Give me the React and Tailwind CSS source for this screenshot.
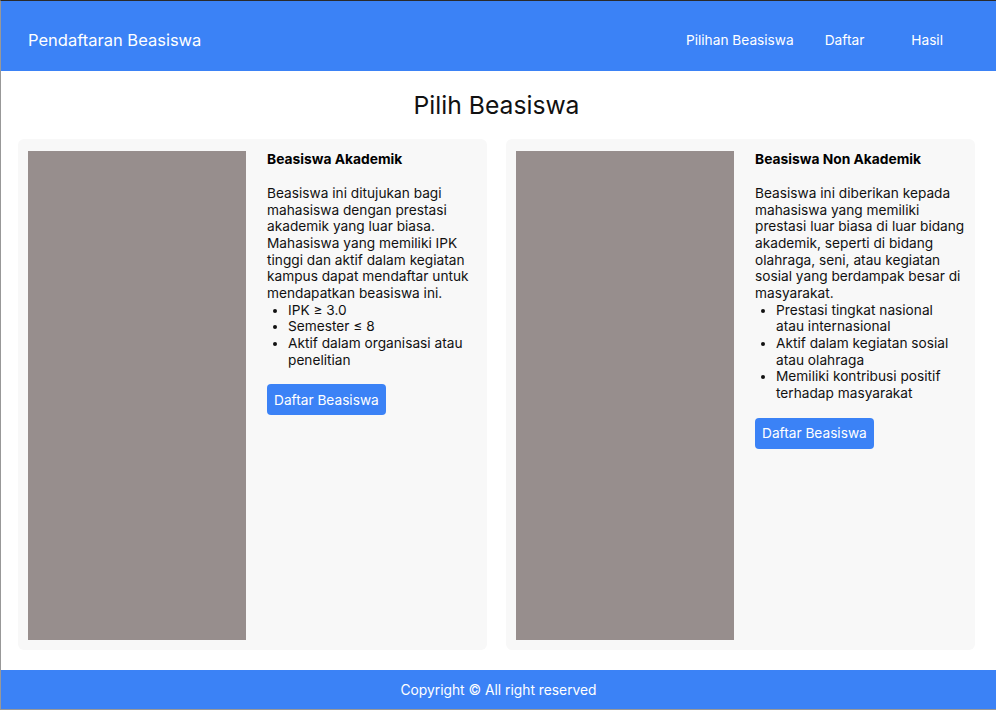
import React from 'react';

const scholarships = [
  {
    id: 'akademik',
    title: 'Beasiswa Akademik',
    description:
      'Beasiswa ini ditujukan bagi mahasiswa dengan prestasi akademik yang luar biasa. Mahasiswa yang memiliki IPK tinggi dan aktif dalam kegiatan kampus dapat mendaftar untuk mendapatkan beasiswa ini.',
    requirements: ['IPK ≥ 3.0', 'Semester ≤ 8', 'Aktif dalam organisasi atau penelitian'],
  },
  {
    id: 'non-akademik',
    title: 'Beasiswa Non Akademik',
    description:
      'Beasiswa ini diberikan kepada mahasiswa yang memiliki prestasi luar biasa di luar bidang akademik, seperti di bidang olahraga, seni, atau kegiatan sosial yang berdampak besar di masyarakat.',
    requirements: [
      'Prestasi tingkat nasional atau internasional',
      'Aktif dalam kegiatan sosial atau olahraga',
      'Memiliki kontribusi positif terhadap masyarakat',
    ],
  },
];

const ScholarshipCard = ({ item }) => (
  <div className="flex h-[511px] rounded-md bg-[#f8f8f8] pl-[10px] pr-[10px] pt-[12px] pb-[10px]">
    {/* Image placeholder */}
    <div className="w-[218px] shrink-0 bg-[#978e8d]" />
    <div className="ml-[21px] flex-1 text-[13.7px] leading-[16.67px] text-[#111]">
      <h3 className="font-bold text-black text-[13.8px] leading-[17px] mb-[17px]">{item.title}</h3>
      <p>{item.description}</p>
      <ul className="list-disc pl-[21px] pr-[4px]">
        {item.requirements.map((req) => (
          <li key={req}>{req}</li>
        ))}
      </ul>
      <button className="mt-[16px] h-[31px] rounded-[4px] bg-[#3b82f6] px-[7px] text-[13.7px] text-white">
        Daftar Beasiswa
      </button>
    </div>
  </div>
);

const App = () => {
  return (
    <div className="flex min-h-[710px] flex-col border-t border-t-[#2a2a2a] border-l border-l-black/40 border-b border-b-black/40 bg-white font-['Inter','Noto_Sans',sans-serif]">
      {/* Header */}
      <header className="flex h-[70px] items-center bg-[#3b82f6] pt-[8px] pl-[27px] pr-[53px] text-white">
        <div className="text-[16.5px]">Pendaftaran Beasiswa</div>
        <nav className="ml-auto flex items-center text-[13.7px]">
          <a href="#">Pilihan Beasiswa</a>
          <a href="#" className="ml-[31px]">Daftar</a>
          <a href="#" className="ml-[47px]">Hasil</a>
        </nav>
      </header>

      {/* Content */}
      <main className="flex-1 pl-[17px] pr-[21px] pt-[19px] pb-[19px]">
        <h1 className="mb-[18px] text-center text-[24.7px] leading-[31px] text-[#111]">Pilih Beasiswa</h1>
        <div className="grid grid-cols-2 gap-[19px]">
          {scholarships.map((item) => (
            <ScholarshipCard key={item.id} item={item} />
          ))}
        </div>
      </main>

      {/* Footer */}
      <footer className="flex h-[39px] items-center justify-center bg-[#3b82f6] pt-[2px] text-[13.8px] text-white">
        Copyright © All right reserved
      </footer>
    </div>
  );
};

export default App;
